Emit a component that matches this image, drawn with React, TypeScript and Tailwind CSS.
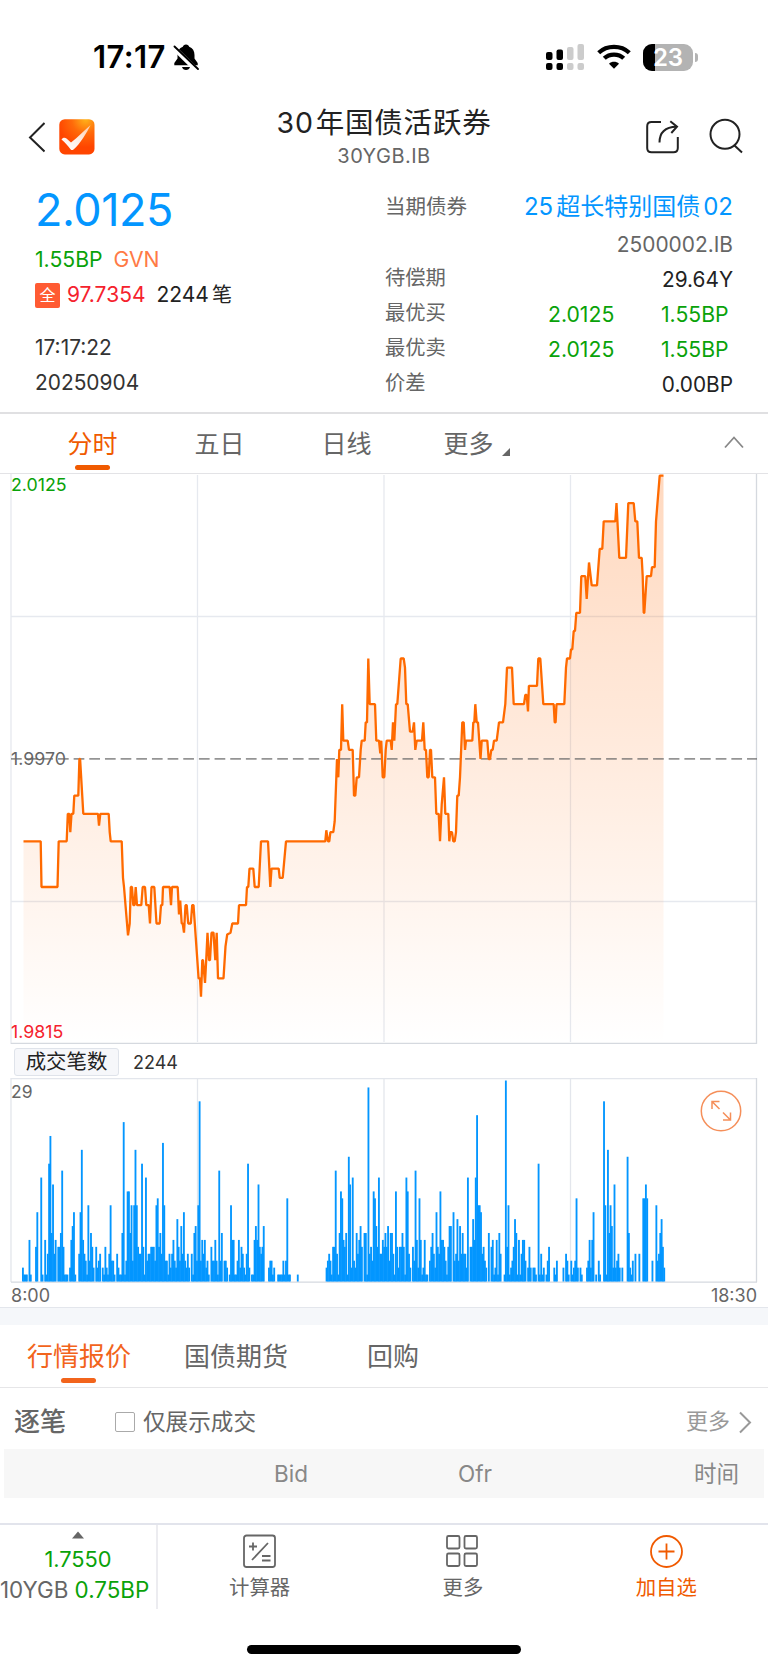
import React from 'react';
import clsx from 'clsx';

// price line: [x, ticks from the 1.9970 reference], one tick is 0.0005
const PRICES: [number, number][] = [
  [23.5, -9], [40.7, -9], [41.5, -14], [57.5, -14], [58.7, -9], [66.7, -9], [67.8, -6], [69.3, -6], [70.3, -8], [71.5, -6],
  [73.3, -6], [74.3, -4], [78.3, -4], [79.4, 0], [80.1, 0], [83.3, -6], [98, -6], [99, -7.3], [100.3, -6], [108.7, -6],
  [109.7, -8], [110.7, -9], [121.7, -9], [123, -13], [124, -14], [128, -19.3], [129.7, -18], [130.8, -14], [132, -14],
  [133.3, -16], [134.5, -16], [135.7, -14], [137, -16], [141.3, -16], [142.7, -14], [145, -14], [146.3, -16], [148.7, -16],
  [150, -18], [151.5, -14], [154.3, -14], [156.5, -18], [159.7, -18], [161, -16], [162.3, -16], [163, -14], [169.7, -14],
  [171, -16], [172, -14], [177.7, -14], [179, -17], [180.2, -15.5], [181.7, -18], [182.7, -18], [184, -19], [185.5, -16],
  [186.7, -16], [188.2, -18], [190.8, -18], [192.2, -16], [193.5, -16], [198.6, -24], [200, -24], [201, -26], [202.3, -22],
  [203, -22], [205, -24.5], [206.2, -22], [207.5, -19], [209, -22], [210, -22], [211.5, -19], [213.5, -19], [215.3, -22],
  [216.7, -19], [218, -24], [223.5, -24], [225.5, -20.5], [227.2, -19.2], [230.5, -19], [232.3, -18], [238, -18], [239, -16],
  [246, -16], [247, -14], [248.3, -14], [249.5, -12], [253.3, -12], [254.7, -14], [258.7, -14], [261, -9], [268, -9],
  [270.3, -14], [271.5, -12], [278.7, -12], [279.7, -13], [282.7, -13], [286, -9], [325.3, -9], [326.3, -7.8], [328, -9],
  [329.3, -9], [330.4, -8], [333.3, -8], [334.7, -6.8], [337, 0], [338.3, -2], [339.3, 1], [341, 1], [342.2, 6], [343.3, 2],
  [347.7, 2], [349, 1], [352.7, 1], [354, -4], [355.3, -4], [356.7, -2], [359, -2], [360.7, 1], [361.7, 2], [364.7, 2],
  [365.7, 4], [367, 4], [368.3, 11], [369.7, 6], [375, 6], [376.3, 2], [379, 2], [380.3, 0.6], [381.3, 2], [382.7, -2],
  [384.3, -2], [385.7, 1], [386.7, 2], [390.7, 2], [391.7, 1], [393, 4], [394.3, 2], [396, 6], [397.3, 6], [400.7, 11],
  [403.7, 11], [405, 10], [406.3, 6], [407.7, 6], [410, 3], [412.7, 3], [414, 4], [415.3, 1], [416.7, 2], [422, 2],
  [423.3, 4], [424.7, 1], [426, 1], [427.3, -2], [428.7, -2], [430, 1], [431, 1], [432.3, -2], [435, -2], [436.3, -6],
  [438.7, -6], [440, -9], [441.7, -5], [444, -2], [445.3, -6], [448.3, -6], [449.3, -9], [450.3, -8], [452, -8],
  [453.3, -9], [454.7, -9], [456, -8], [457.3, -4], [458.7, -4], [460, -2], [462.3, 4], [463.7, 4], [465, 1], [466, 2],
  [472.3, 2], [473.3, 4], [474.3, 4], [475.3, 6], [476.7, 4], [478, 4], [480.5, 0], [481.7, 2], [487.3, 2], [488.7, 0],
  [490, 0], [491.3, 1], [492.7, 1], [494, 2], [496.7, 2], [499, 4], [503, 4], [505.3, 6], [507, 10], [512, 10],
  [513.7, 6], [524, 6], [525.3, 7], [526.7, 7], [528, 5.2], [528.9, 8], [537, 8], [538.3, 11], [540.3, 11], [543.3, 6],
  [553.7, 6], [554.7, 4], [555.6, 4], [556.5, 6], [564.3, 6], [566, 10], [567, 11], [570, 11], [571, 12], [572.3, 12],
  [573.7, 14], [575, 14], [576.3, 16], [580, 16], [581.3, 20], [585.3, 20], [586.7, 17.5], [589, 21.5], [591.7, 19],
  [597, 19], [599.7, 23], [602.3, 23], [603.7, 26], [615.3, 26], [616.5, 28], [619.3, 22], [626, 22], [628.3, 28],
  [633.7, 28], [635.3, 26], [637.3, 26], [639, 22], [641.7, 22], [642.7, 20], [643.7, 16], [644.3, 16], [646.7, 20],
  [651, 20], [652, 21], [654.7, 21], [656, 26], [659.7, 31], [663.5, 31],
];

// trades per minute
const MORNING = [
  2, 1, 1, 1, 0, 6, 1, 0, 0, 0, 5, 10, 0, 0, 15, 1, 0, 6, 1, 4, 17, 21, 7, 14, 4, 6, 0, 5, 5, 7, 16, 5, 1, 1, 1, 0, 2, 6, 8,
  10, 1, 0, 0, 4, 10, 19, 6, 4, 3, 1, 11, 3, 7, 5, 2, 0, 5, 2, 3, 4, 0, 2, 1, 5, 2, 1, 4, 11, 3, 3, 1, 0, 4, 2, 1, 1, 7, 23,
  1, 3, 13, 13, 7, 11, 3, 11, 19, 11, 5, 4, 4, 17, 5, 1, 15, 3, 4, 4, 5, 5, 5, 3, 11, 12, 5, 7, 4, 20, 11, 3, 3, 1, 4, 2, 4,
  6, 3, 2, 9, 5, 3, 8, 4, 10, 3, 2, 4, 2, 0, 4, 1, 7, 8, 3, 11, 26, 3, 6, 4, 6, 2, 3, 1, 0, 5, 3, 3, 6, 3, 1, 16, 3, 7, 0, 3,
  3, 2, 0, 1, 11, 6, 6, 1, 1, 3, 6, 2, 5, 4, 2, 1, 4, 17, 2, 0, 1, 1, 6, 8, 6, 14, 5, 4, 5, 8, 0, 0, 0, 2, 3, 3, 1, 2, 0, 0,
  1, 1, 1, 1, 3, 1, 3, 12, 1, 1, 0, 0, 0, 0, 0, 1,
];

const AFTERNOON = [
  2, 3, 4, 3, 1, 5, 5, 16, 4, 1, 7, 13, 12, 6, 5, 7, 1, 18, 14, 2, 15, 3, 2, 7, 4, 6, 8, 5, 0, 7, 7, 1, 28, 4, 5, 3, 13, 12,
  8, 5, 15, 4, 4, 6, 5, 7, 5, 8, 3, 7, 7, 4, 1, 13, 5, 2, 5, 5, 7, 5, 1, 15, 13, 4, 2, 0, 5, 3, 16, 6, 2, 12, 6, 1, 2, 6, 1,
  1, 0, 3, 5, 7, 4, 2, 10, 5, 4, 13, 6, 6, 5, 3, 1, 5, 8, 8, 0, 10, 3, 4, 9, 3, 8, 4, 7, 4, 4, 2, 15, 0, 5, 5, 9, 6, 15, 24,
  11, 11, 10, 4, 5, 3, 2, 0, 7, 0, 5, 6, 1, 2, 6, 1, 7, 4, 0, 0, 1, 29, 5, 11, 1, 2, 3, 5, 9, 7, 1, 6, 1, 4, 6, 6, 3, 0, 2,
  5, 2, 0, 2, 2, 1, 0, 17, 1, 4, 1, 2, 0, 1, 3, 5, 0, 0, 0, 2, 1, 3, 0, 0, 0, 0, 2, 0, 4, 3, 1, 0, 3, 1, 2, 3, 12, 2, 0, 2, 1,
  0, 0, 0, 2, 3, 6, 2, 6, 10, 0, 1, 0, 3, 1, 0, 0, 26, 11, 1, 19, 7, 11, 8, 2, 14, 2, 3, 4, 2, 0, 2, 0, 0, 0, 18, 7, 2, 1, 3,
  0, 4, 0, 0, 4, 0, 0, 12, 12, 14, 12, 0, 0, 0, 3, 0, 0, 11, 3, 4, 7, 9, 5, 2,
];

const MINUTE = 746 / 570;
const GRID_X = [197.5, 384, 570.5];

const priceY = (ticks: number) => 285 - ticks * 9.14;

const StatusBar: React.FC = () => (
  <div className="flex h-[96px] items-start justify-between pl-[93px] pr-[70px] pt-[40px]">
    <div className="flex h-[34px] items-center">
      <span className="w-[79px] whitespace-nowrap text-[31px] font-semibold leading-[34px] tracking-[0.400px] text-black">17:17</span>
      <svg className="h-[28px] w-[28px]" viewBox="0 0 28 28">
        <path d="M14 1.5c-1.8 0-2.9 1-3.2 2.3C7.300 5.100 5.500 8 5.500 12v3.500L2.300 20v2.300h23.400V20l-3.200-4.500V12c0-4-1.800-6.900-5.300-8.200C16.900 2.500 15.800 1.500 14 1.500z" />
        <path d="M10 24h8c-.5 2-2 3-4 3s-3.500-1-4-3z" />
        <path d="M1.500 4.500L24.500 27" stroke="#fff" strokeWidth="5" />
        <path d="M2.500 3.500L26 26" stroke="#000" strokeWidth="1.900" strokeLinecap="round" />
      </svg>
    </div>
    <div className="flex h-[34px] items-center">
      <svg className="mr-[13px] h-[28px] w-[38px]" viewBox="0 0 38 28">
        <rect x="0" y="9" width="6.500" height="8" rx="2" />
        <rect x="10.500" y="6.500" width="6.500" height="10.500" rx="2" />
        <rect x="21" y="4" width="6.500" height="13" rx="2" fill="#ccc" />
        <rect x="31.500" y="1" width="6.500" height="16" rx="2" fill="#ccc" />
        <rect x="0" y="20" width="6.500" height="7" rx="2" />
        <rect x="10.500" y="20" width="6.500" height="7" rx="2" />
        <rect x="21" y="20" width="6.500" height="7" rx="2" fill="#ccc" />
        <rect x="31.500" y="20" width="6.500" height="7" rx="2" fill="#ccc" />
      </svg>
      <svg className="mr-[12px] h-[28px] w-[34px]" viewBox="0 0 34 28" fill="none" stroke="#000" strokeWidth="4.300">
        <path d="M1.700 9.700C10 1.900 24 1.900 32.300 9.700" />
        <path d="M7.300 15.300C12.500 10.300 21.500 10.300 26.700 15.300" />
        <path d="M17 25.700l-5-5c2.700-2.500 7.300-2.500 10 0z" fill="#000" stroke="none" />
      </svg>
      <div className="relative flex h-[27px] w-[50px] items-center justify-center overflow-hidden rounded-[9px] bg-[#b3b3b3]">
        <div className="absolute left-0 top-0 h-full w-[12px] bg-black" />
        <span className="relative text-[24px] font-semibold leading-[27px] text-white">23</span>
      </div>
      <div className="ml-[2px] h-[9px] w-[3px] rounded-r-full bg-[#b3b3b3]" />
    </div>
  </div>
);

const Header: React.FC = () => (
  <header className="grid h-[84px] grid-cols-[1fr_auto_1fr] items-start">
    <div className="flex items-center gap-[14px] pl-[28px] pt-[23px]">
      <svg className="h-[34px] w-[17px]" viewBox="0 0 17 34" fill="none" stroke="#222" strokeWidth="2">
        <path d="M16.500 3L2 17.500L16.500 31.500" />
      </svg>
      <svg className="h-[36px] w-[36px]" viewBox="0 0 36 36">
        <defs>
          <radialGradient id="logo" cx="0.75" cy="0" r="0.8">
            <stop offset="0" stopColor="#ffb31a" />
            <stop offset="0.500" stopColor="#ff6a0a" />
            <stop offset="1" stopColor="#ff4500" />
          </radialGradient>
          <linearGradient id="tick" x1="0" y1="1" x2="1" y2="0">
            <stop offset="0" stopColor="#ffffff" />
            <stop offset="0.500" stopColor="#fdeee6" />
            <stop offset="1" stopColor="#ffc9a3" />
          </linearGradient>
        </defs>
        <rect x="0.300" y="0.200" width="35.200" height="35.200" rx="5.500" fill="url(#logo)" />
        <path d="M2.500 20.500C3.500 18.500 6 18 7.500 19.500L12 23.500C19 18 26 11 31.500 6C28 13.500 21 25 14.500 30.500C13.500 31.300 12.500 31.300 11.500 30.200C9 27 6 23.500 2.500 20.500z" fill="url(#tick)" />
      </svg>
    </div>
    <div className="flex flex-col items-center pt-[9px]">
      <h1 className="whitespace-nowrap text-[28.500px] leading-[36px] tracking-[0.800px] text-[#222]">
        <span className="mr-[2px]">30</span>年国债活跃券
      </h1>
      <p className="pt-[3px] text-[20px] leading-[24px] tracking-[0.500px] text-[#666]">30YGB.IB</p>
    </div>
    <div className="flex justify-end gap-[28px] pr-[24px] pt-[22px]">
      <svg className="h-[36px] w-[36px]" viewBox="0 0 36 36" fill="none" stroke="#222" strokeWidth="2">
        <path d="M17 4H7.500Q3.200 4 3.200 8.300V30Q3.200 34.300 7.500 34.300H29.500Q33.800 34.300 33.800 30V19" />
        <path d="M15.500 24.500C15.500 14.500 20.500 9 32.500 8.700" />
        <path d="M26.300 3.200L33 8.700L27.300 15" />
      </svg>
      <svg className="h-[36px] w-[36px]" viewBox="0 0 36 36" fill="none" stroke="#222" strokeWidth="2">
        <circle cx="17" cy="16.200" r="14.500" />
        <path d="M26 27L34 34.500" />
      </svg>
    </div>
  </header>
);

type QuoteRowProps = {
  label: string;
  value: string;
};

const QuoteRow: React.FC<QuoteRowProps> = ({ label, value }) => (
  <div className="flex h-[35px] items-center justify-between">
    <span className="text-[20.300px] text-[#666]">{label}</span>
    <span className="pt-[2px] text-[20.800px] text-[#222]">{value}</span>
  </div>
);

const BestRow: React.FC<QuoteRowProps> = ({ label, value }) => (
  <div className="flex h-[35px] items-center">
    <span className="w-[163px] text-[20.300px] text-[#666]">{label}</span>
    <span className="w-[113px] pt-[2px] text-[21.200px] text-[#09a209]">{value}</span>
    <span className="pt-[2px] text-[21.200px] text-[#09a209]">1.55BP</span>
  </div>
);

const Quote: React.FC = () => (
  <section className="flex h-[234px] border-b-2 border-[#e0e0e2]">
    <div className="w-[385px] pl-[35px] pt-[4px]">
      <div className="h-[52px] text-[45px] leading-[52px] tracking-[-0.500px] text-[#0396ff]">2.0125</div>
      <div className="flex h-[40px] items-center gap-[11px] pt-[7px] text-[21.200px]">
        <span className="text-[#09a209]">1.55BP</span>
        <span className="text-[#ff7a45]">GVN</span>
      </div>
      <div className="flex h-[38px] items-center">
        <span className="mr-[7px] flex h-[25px] w-[25px] items-center justify-center rounded-[2px] bg-[#ff5b33] text-[16px] text-white">全</span>
        <span className="mr-[11px] text-[21px] text-[#f5222d]">97.7354</span>
        <span className="text-[21px] text-[#222]">
          <span className="mr-[3px]">2244</span>
          <span className="text-[20px]">笔</span>
        </span>
      </div>
      <div className="mt-[16px] flex h-[35px] items-center text-[20.900px] text-[#333]">17:17:22</div>
      <div className="flex h-[35px] items-center text-[20.900px] text-[#333]">20250904</div>
    </div>
    <div className="flex-1 pr-[35px] pt-[7px]">
      <div className="flex h-[40px] items-center justify-between">
        <span className="text-[20.500px] text-[#666]">当期债券</span>
        <span className="whitespace-nowrap text-[24px] text-[#0396ff]">
          <span className="mr-[3px]">25</span>超长特别国债<span className="ml-[3px]">02</span>
        </span>
      </div>
      <div className="flex h-[34px] items-center justify-end pt-[1px] text-[20.900px] text-[#666]">2500002.IB</div>
      <QuoteRow label="待偿期" value="29.64Y" />
      <BestRow label="最优买" value="2.0125" />
      <BestRow label="最优卖" value="2.0125" />
      <QuoteRow label="价差" value="0.00BP" />
    </div>
  </section>
);

const PERIODS = ['分时', '五日', '日线', '更多'];

const PeriodTabs: React.FC = () => (
  <nav className="flex h-[60px] items-stretch justify-between border-b border-[#e3e3e6] pl-[29px] pr-[24px]">
    <div className="flex">
      {PERIODS.map((period, i) => (
        <div key={period} className={clsx('flex w-[127px] flex-col items-center pt-[12px]', i === 3 && 'ml-[3px]')}>
          <span className={clsx('flex items-end text-[25px] leading-[36px]', i === 0 ? 'text-[#f05a00]' : 'text-[#666]')}>
            {period}
            {i === 3 && (
              <svg className="mb-[6px] ml-[8px] h-[8px] w-[8px]" viewBox="0 0 8 8">
                <path d="M8 0V8H0z" fill="#666" />
              </svg>
            )}
          </span>
          {i === 0 && <span className="mt-[3px] h-[5px] w-[35px] rounded-full bg-[#f05a00]" />}
        </div>
      ))}
    </div>
    <svg className="mt-[21px] h-[14px] w-[20px]" viewBox="0 0 20 14" fill="none" stroke="#888" strokeWidth="1.800">
      <path d="M1 12.500L10 2.500L19 12.500" />
    </svg>
  </nav>
);

const PriceChart: React.FC = () => {
  const line = PRICES.map(([x, ticks]) => `${x},${priceY(ticks).toFixed(1)}`).join(' ');

  return (
    <svg className="block h-[570px] w-full text-[17.800px]" viewBox="0 0 768 570">
      <defs>
        <linearGradient id="area" x1="0" y1="0" x2="0" y2="570" gradientUnits="userSpaceOnUse">
          <stop offset="0" stopColor="#ff6600" stopOpacity="0.25" />
          <stop offset="0.500" stopColor="#ff6600" stopOpacity="0.13" />
          <stop offset="1" stopColor="#ff6600" stopOpacity="0" />
        </linearGradient>
      </defs>
      <g stroke="#e6e9ef" strokeWidth="1.300">
        {GRID_X.map((x) => (
          <path key={x} d={`M${x} 1V568`} />
        ))}
        <path d="M11 142.500H757M11 427.500H757M11 0V570" />
        <path d="M756.500 0V570" stroke="#d5d9df" />
        <path d="M11 569.500H757" stroke="#d5d9df" />
      </g>
      <polygon points={`23.5,570 ${line} 663.5,570`} fill="url(#area)" />
      <path d="M11 284.800H757" stroke="#666" strokeOpacity="0.700" strokeWidth="1.700" strokeDasharray="10.700 4.960" />
      <polyline points={line} fill="none" stroke="#ff6a00" strokeWidth="2.300" strokeLinejoin="bevel" />
      <text x="11" y="16.500" fill="#09a209">2.0125</text>
      <text x="11" y="290.500" fill="#666">1.9970</text>
      <text x="11" y="564" fill="#f5222d">1.9815</text>
    </svg>
  );
};

type BarsProps = {
  start: number;
  counts: number[];
};

// bars are slightly wider than a minute, so that neighbours close up
const Bars: React.FC<BarsProps> = ({ start, counts }) => (
  <g fill="#0396ff">
    {counts.map((count, i) =>
      count > 0 ? (
        <rect key={i} x={22 + (start + i) * MINUTE} y={203.5 - count * 6.93} width="1.850" height={count * 6.93} />
      ) : null,
    )}
  </g>
);

const VolumeChart: React.FC = () => (
  <section className="relative">
    <div className="flex h-[34px] items-center pl-[14px] pt-[1px]">
      <span className="flex h-[28px] w-[105px] items-center justify-center rounded-[3px] border border-[#dfe3ea] bg-[#f6f7fa] pt-[2px] text-[20.400px] text-[#222]">
        成交笔数
      </span>
      <span className="pl-[14px] pt-[1px] text-[18px] text-[#333]">2244</span>
    </div>
    <svg className="block h-[229px] w-full text-[17.500px]" viewBox="0 0 768 229">
      <g stroke="#e3e6ec" strokeWidth="1.300">
        {GRID_X.map((x) => (
          <path key={x} d={`M${x} 0V203`} />
        ))}
        <path d="M11 0.700H757M11 0V204" />
        <path d="M756.500 0V204M11 204.200H757" stroke="#d5d9df" />
      </g>
      <Bars start={0} counts={MORNING} />
      <Bars start={232} counts={AFTERNOON} />
      <text x="11" y="20" fill="#666">29</text>
      <text x="11" y="224" fill="#666" className="text-[18px]">8:00</text>
      <text x="757" y="224" fill="#666" textAnchor="end" className="text-[18px]">18:30</text>
    </svg>
    <svg className="absolute right-[26px] top-[46px] h-[42px] w-[42px]" viewBox="0 0 42 42" fill="none" stroke="#f58f5a" strokeWidth="1.500">
      <circle cx="21" cy="21" r="19.700" />
      <path d="M12 19V11.500H19.500M12 11.500L19.500 19M30.500 22.500V30H23M30.500 30L23 22.500" />
    </svg>
  </section>
);

const MarketTabs: React.FC = () => (
  <nav className="flex h-[63px] items-start border-b border-[#e6e6e8] pl-[27px] text-[26px] leading-[36px] text-[#666]">
    <div className="flex w-[157px] flex-col pt-[14px] text-[#f2641c]">
      <span>行情报价</span>
      <span className="ml-[34px] mt-[3px] h-[5px] w-[35px] rounded-full bg-[#f2641c]" />
    </div>
    <span className="w-[183px] pt-[14px]">国债期货</span>
    <span className="pt-[14px]">回购</span>
  </nav>
);

const Ticks: React.FC = () => (
  <section className="h-[135px]">
    <div className="flex h-[61px] items-center pl-[14px] pr-[16px] pt-[6px]">
      <h2 className="mr-[49px] text-[26px] font-medium text-[#666]">逐笔</h2>
      <span className="mr-[8px] h-[20px] w-[20px] rounded-[2px] border-[1.500px] border-[#aaa]" />
      <span className="text-[22.600px] text-[#666]">仅展示成交</span>
      <span className="ml-auto text-[22px] text-[#999]">更多</span>
      <svg className="ml-[8px] h-[24px] w-[14px]" viewBox="0 0 14 24" fill="none" stroke="#999" strokeWidth="2">
        <path d="M2 2.500L12 12.500L2 22.500" />
      </svg>
    </div>
    <div className="mx-[4px] flex h-[49px] items-center bg-[#f7f7f7] text-[22.500px] text-[#888]">
      <span className="ml-[270px] w-[184px]">Bid</span>
      <span>Ofr</span>
      <span className="ml-auto pr-[25px]">时间</span>
    </div>
  </section>
);

type ActionProps = {
  label: string;
  active?: boolean;
  children: React.ReactNode;
};

const Action: React.FC<ActionProps> = ({ label, active, children }) => (
  <div className={clsx('flex w-1/3 flex-col items-center pt-[9px]', active ? 'text-[#f05a00]' : 'text-[#666]')}>
    <svg className="h-[35px] w-[35px]" viewBox="0 0 35 35" fill="none" stroke="currentColor" strokeWidth="1.800">
      {children}
    </svg>
    <span className="pt-[5px] text-[20.400px] leading-[28px]">{label}</span>
  </div>
);

const BottomBar: React.FC = () => (
  <footer className="h-[147px] border-t-2 border-[#e2e4ec]">
    <div className="flex h-[84px]">
      <div className="flex w-[158px] shrink-0 flex-col items-center border-r-2 border-[#ececf0] pt-[6px]">
        <svg className="h-[8px] w-[12px]" viewBox="0 0 12 8">
          <path d="M6 0.500L12 7.500H0z" fill="#666" />
        </svg>
        <span className="pt-[6px] text-[21.800px] leading-[28px] text-[#09a209]">1.7550</span>
        <span className="self-start whitespace-nowrap pt-[3px] text-[22.400px] leading-[28px] text-[#666]">
          10YGB <span className="text-[#09a209]">0.75BP</span>
        </span>
      </div>
      <div className="flex flex-1">
        <Action label="计算器">
          <rect x="2" y="1.500" width="31" height="31.500" rx="2.500" />
          <path d="M7 12.500H15M11 8.500V16.500M26 9L10 26M20 22H28.500M20 26.500H28.500" />
        </Action>
        <Action label="更多">
          <rect x="2" y="2" width="12.500" height="12.500" rx="1.500" />
          <rect x="19.500" y="2" width="12.500" height="12.500" rx="1.500" />
          <rect x="2" y="19.500" width="12.500" height="12.500" rx="1.500" />
          <rect x="19.500" y="19.500" width="12.500" height="12.500" rx="1.500" />
        </Action>
        <Action label="加自选" active>
          <circle cx="17.500" cy="17.500" r="15.500" />
          <path d="M9.500 17.500H25.500M17.500 9.500V25.500" />
        </Action>
      </div>
    </div>
    <div className="mx-auto mt-[36px] h-[9px] w-[274px] rounded-full bg-black" />
  </footer>
);

const App: React.FC = () => {
  return (
    <main className="h-[1669px] w-[768px] overflow-hidden bg-white font-['Inter','Noto_Sans_CJK_SC',sans-serif]">
      <StatusBar />
      <Header />
      <Quote />
      <PeriodTabs />
      <PriceChart />
      <VolumeChart />
      <div className="h-[18px] border-t border-[#e3e6ec] bg-[#f5f7fa]" />
      <MarketTabs />
      <Ticks />
      <BottomBar />
    </main>
  );
};

export default App;
